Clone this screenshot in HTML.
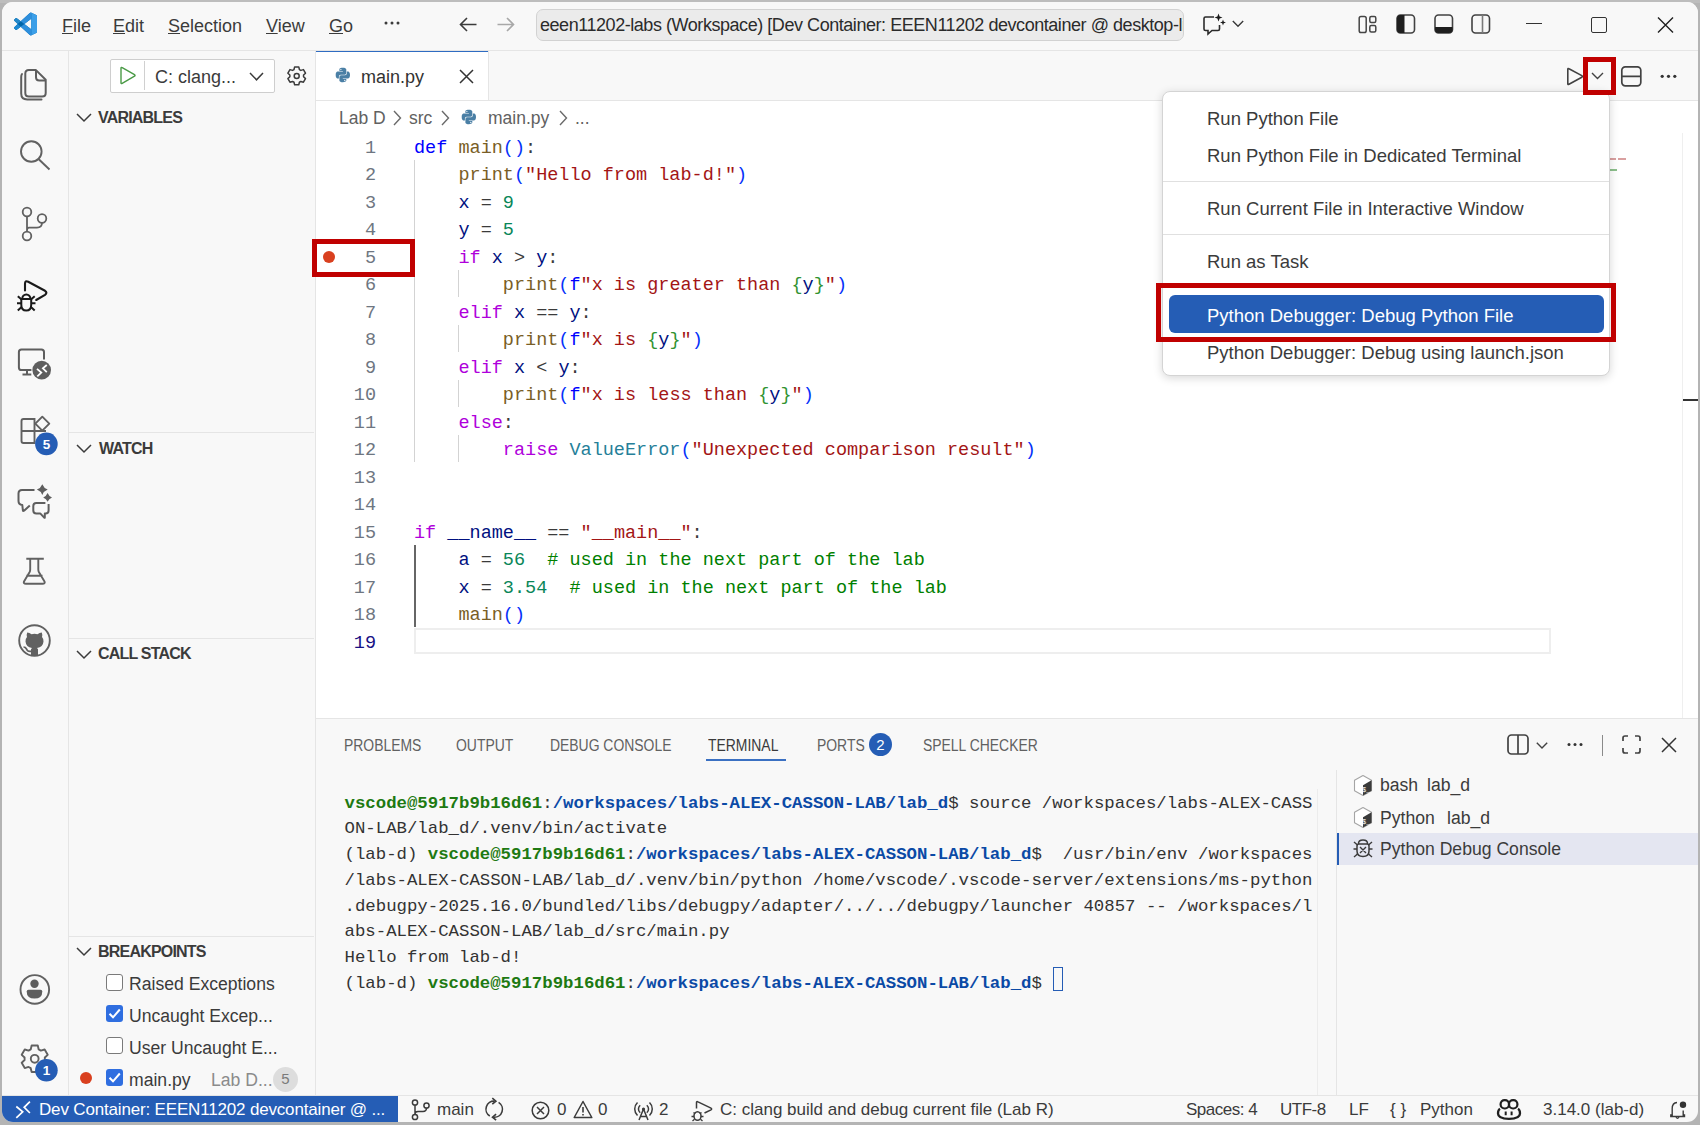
<!DOCTYPE html>
<html><head><meta charset="utf-8">
<style>
*{box-sizing:border-box;margin:0;padding:0}
html,body{width:1700px;height:1125px;overflow:hidden;background:#b4b4b4;font-family:"Liberation Sans",sans-serif;color:#3b3b3b}
.a{position:absolute}
#win{position:absolute;left:2px;top:2px;width:1696px;height:1120px;border-radius:11px;overflow:hidden;background:#f8f8f8}
#in{position:absolute;left:-2px;top:-2px;width:1700px;height:1125px}
.t{position:absolute;white-space:pre;line-height:1}
.ui{font-size:18px}
.mono{font-family:"Liberation Mono",monospace}
svg{position:absolute;overflow:visible}
.hl{position:absolute;background:#e5e5e5}
.vl{position:absolute;background:#e5e5e5}

#code{position:absolute;left:414px;top:135px;width:1200px;height:560px;font-family:"Liberation Mono",monospace;font-size:18.5px;color:#3b3b3b}
#nums{position:absolute;left:315px;top:135px;width:61px;height:560px;font-family:"Liberation Mono",monospace;font-size:18.5px;color:#6e7681;text-align:right}
.cl{position:absolute;left:0;height:27.49px;line-height:27.49px;white-space:pre}
.ln{position:absolute;left:0;width:61px;height:27.49px;line-height:27.49px}
.ln.act{color:#171184}
.kw{color:#0000ff}.fn{color:#795e26}.b1{color:#0431fa}.b2{color:#319331}.s{color:#a31515}.v{color:#001080}.n{color:#098658}.c{color:#af00db}.cl2{color:#267f99}.cm{color:#008000}
span.cl{position:static;color:#267f99}
.red{position:absolute;border:5px solid #c00000}

.hdr{position:absolute;white-space:pre;line-height:1;font-weight:bold;font-size:16px;color:#3b3b3b;letter-spacing:-0.8px}
.sb{position:absolute;white-space:pre;line-height:1;font-size:17px;color:#3b3b3b}
.bp{position:absolute;white-space:pre;line-height:1;font-size:17.6px;color:#3b3b3b}
.cb{position:absolute;width:17px;height:17px;border:1.6px solid #7a7a7a;border-radius:3px;background:#fff}
.cbc{position:absolute;width:17px;height:17px;border-radius:3px;background:#2f6ee0}

.mi{position:absolute;left:44px;white-space:pre;line-height:1;font-size:18.5px;color:#3b3b3b}

.ptab{position:absolute;white-space:pre;line-height:1;font-size:16px;transform:scaleX(0.87);transform-origin:0 0;color:#616161}
#term{position:absolute;left:344.5px;top:0;font-family:"Liberation Mono",monospace;font-size:17.35px;color:#333}
.tl{position:absolute;left:0;white-space:pre;line-height:1}
.g{color:#1e7a12;font-weight:bold}.bl{color:#0b4aa6;font-weight:bold}
.tabit{position:absolute;white-space:pre;line-height:1;font-size:17.6px;color:#3b3b3b}
</style></head><body>
<div class="a" style="left:0;top:0;width:1700px;height:3px;background:#bdbdbd"></div>
<div id="win"><div id="in">

<!-- TITLE BAR -->
<div class="a" style="left:0;top:0;width:1700px;height:50px;background:#f8f8f8"></div>
<div class="hl" style="left:0;top:50px;width:1700px;height:1px"></div>
<svg style="left:14px;top:12px" width="23" height="24" viewBox="0 0 100 100">
<path fill="#0065a9" d="M96.46 10.8L75.86.87a6.23 6.23 0 0 0-7.1 1.21L29.35 38.04 12.17 25.01a4.16 4.16 0 0 0-5.32.24L1.34 30.25a4.17 4.17 0 0 0 0 6.16L16.23 50 1.33 63.59a4.17 4.17 0 0 0 0 6.16l5.52 5.01a4.16 4.16 0 0 0 5.32.24l17.18-13.04 39.41 35.96a6.23 6.23 0 0 0 7.1 1.21l20.6-9.93A6.25 6.25 0 0 0 100 83.57V16.43a6.25 6.25 0 0 0-3.54-5.63zM75.01 72.7L45.11 50l29.9-22.7z"/>
<path fill="#2489ca" d="M1.34 30.25a4.17 4.17 0 0 0 0 6.16L16.23 50l13.12-11.96-17.18-13.03a4.16 4.16 0 0 0-5.32.24z"/>
<path fill="#1f8ad2" d="M12.17 74.99l17.18-13.04L16.23 50 1.33 63.59a4.17 4.17 0 0 0 0 6.16l5.52 5.01a4.16 4.16 0 0 0 5.32.24z"/>
<path fill="#3c9fe8" d="M75.86 99.13a6.23 6.23 0 0 1-7.1-1.21c2.3 2.3 6.24.67 6.24-2.59V4.67c0-3.26-3.94-4.89-6.24-2.59a6.23 6.23 0 0 1 7.1-1.21l20.6 9.93A6.25 6.25 0 0 1 100 16.43v67.14a6.25 6.25 0 0 1-3.54 5.63z"/>
<path fill="#2e8fdc" d="M68.76 2.08L29.35 38.04 45.11 50 75 27.3V4.67c0-3.26-3.94-4.89-6.24-2.59zM45.11 50L29.35 61.96l39.41 35.96c2.3 2.3 6.24.67 6.24-2.59V72.7z"/>
</svg>
<div class="t ui" style="left:62px;top:17px"><u>F</u>ile</div>
<div class="t ui" style="left:113px;top:17px"><u>E</u>dit</div>
<div class="t ui" style="left:168px;top:17px"><u>S</u>election</div>
<div class="t ui" style="left:266px;top:17px"><u>V</u>iew</div>
<div class="t ui" style="left:329px;top:17px"><u>G</u>o</div>
<svg style="left:384px;top:21px" width="16" height="4"><circle cx="2" cy="2" r="1.5" fill="#3b3b3b"/><circle cx="8" cy="2" r="1.5" fill="#3b3b3b"/><circle cx="14" cy="2" r="1.5" fill="#3b3b3b"/></svg>
<svg style="left:459px;top:17px" width="18" height="15" viewBox="0 0 18 15"><path d="M8 1L1.5 7.5L8 14M1.5 7.5H17.5" fill="none" stroke="#3b3b3b" stroke-width="1.6"/></svg>
<svg style="left:497px;top:17px" width="18" height="15" viewBox="0 0 18 15"><path d="M10 1L16.5 7.5L10 14M16.5 7.5H0.5" fill="none" stroke="#a8a8a8" stroke-width="1.6"/></svg>
<div class="a" style="left:536px;top:9px;width:648px;height:32px;background:#ebebeb;border:1px solid #d2d2d2;border-radius:7px;overflow:hidden"><div class="t ui" style="left:3px;top:6px;color:#2b2b2b;letter-spacing:-0.45px">eeen11202-labs (Workspace) [Dev Container: EEEN11202 devcontainer @ desktop-linux]</div></div>
<svg style="left:1203px;top:13px" width="24" height="22" viewBox="0 0 24 22"><path d="M11 4H2.5Q1 4 1 5.5V16Q1 17.5 2.5 17.5H5V21L9 17.5H15Q16.5 17.5 16.5 16V12" fill="none" stroke="#2b2b2b" stroke-width="1.6"/><path d="M15.5 0.5L16.6 3.4L19.5 4.5L16.6 5.6L15.5 8.5L14.4 5.6L11.5 4.5L14.4 3.4Z" fill="#1a1a1a"/><path d="M20 6.5L20.8 8.7L23 9.5L20.8 10.3L20 12.5L19.2 10.3L17 9.5L19.2 8.7Z" fill="#1a1a1a"/></svg>
<svg style="left:1232px;top:20px" width="12" height="8" viewBox="0 0 12 8"><path d="M0.8 1L6 6.3L11.2 1" fill="none" stroke="#3b3b3b" stroke-width="1.4"/></svg>
<svg style="left:1358px;top:15px" width="20" height="19" viewBox="0 0 20 19"><rect x="1.2" y="1.5" width="7" height="16" rx="1.8" fill="none" stroke="#454545" stroke-width="1.5"/><rect x="11.8" y="1.5" width="6" height="6" rx="1.5" fill="none" stroke="#454545" stroke-width="1.5"/><rect x="11.8" y="10.5" width="6" height="6.5" rx="1.5" fill="none" stroke="#454545" stroke-width="1.5"/></svg>
<svg style="left:1396px;top:14px" width="20" height="20" viewBox="0 0 20 20"><rect x="1" y="1" width="17.5" height="18" rx="3.5" fill="none" stroke="#424242" stroke-width="1.6"/><path d="M4.5 1H8.5V19H4.5Q1 19 1 15.5V4.5Q1 1 4.5 1Z" fill="#1f1f1f"/></svg>
<svg style="left:1434px;top:14px" width="20" height="20" viewBox="0 0 20 20"><rect x="1" y="1" width="17.5" height="18" rx="3.5" fill="none" stroke="#424242" stroke-width="1.6"/><path d="M1 13H18.5V15.5Q18.5 19 15 19H4.5Q1 19 1 15.5Z" fill="#1f1f1f"/></svg>
<svg style="left:1471px;top:14px" width="20" height="20" viewBox="0 0 20 20"><rect x="1" y="1" width="17.5" height="18" rx="3.5" fill="none" stroke="#424242" stroke-width="1.6"/><path d="M11.5 1V19" stroke="#7a7a7a" stroke-width="1.6"/></svg>
<div class="a" style="left:1526px;top:23px;width:16px;height:1.3px;background:#333"></div>
<div class="a" style="left:1591px;top:17px;width:15.5px;height:15.5px;border:1.3px solid #333;border-radius:2px"></div>
<svg style="left:1657px;top:17px" width="17" height="16" viewBox="0 0 17 16"><path d="M1 0.5L16 15.5M16 0.5L1 15.5" stroke="#1f1f1f" stroke-width="1.4"/></svg>

<!-- ACTIVITY BAR -->
<div class="vl" style="left:68px;top:51px;width:1px;height:1044px"></div>
<svg style="left:14px;top:62px" width="40" height="40"><path d="M22 8.1H14.8Q11.3 8.1 11.3 11.6V31Q11.3 34.5 14.8 34.5H28.2Q31.7 34.5 31.7 31V17.8L22 8.1Z" fill="none" stroke="#5e5e5e" stroke-width="2" stroke-linejoin="round"/><path d="M22 8.3V15.3Q22 18.5 25.2 18.5H31.5" fill="none" stroke="#5e5e5e" stroke-width="2"/><path d="M8 12Q7.2 13 7.2 15V31.5Q7.2 37.4 13.2 37.4H27.5" fill="none" stroke="#5e5e5e" stroke-width="2" stroke-linecap="round"/></svg>
<svg style="left:18px;top:138px" width="34" height="34" viewBox="0 0 34 34"><circle cx="13.3" cy="13.5" r="10.3" fill="none" stroke="#616161" stroke-width="1.9"/><path d="M20.5 21L31.5 31.5" stroke="#616161" stroke-width="1.9"/></svg>
<svg style="left:18px;top:203px" width="32" height="40" viewBox="0 0 32 40"><circle cx="9" cy="9" r="4.3" fill="none" stroke="#616161" stroke-width="1.8"/><circle cx="24" cy="15.5" r="4.3" fill="none" stroke="#616161" stroke-width="1.8"/><circle cx="9" cy="33" r="4.3" fill="none" stroke="#616161" stroke-width="1.8"/><path d="M9 13.3V28.7M24 19.8Q24 24.6 19 24.6H11Q9 24.6 9 27" fill="none" stroke="#616161" stroke-width="1.8"/></svg>
<svg style="left:12px;top:275px" width="40" height="40"><path d="M13 15.5V8.8Q13 5.2 16.2 6.8L33 15.8Q35.8 17.8 33 19.8L24.2 25" fill="none" stroke="#1a1a1a" stroke-width="2.1" stroke-linejoin="round" stroke-linecap="round"/><path d="M10.2 24A4.1 4.6 0 0 1 18.4 24" fill="none" stroke="#1a1a1a" stroke-width="2"/><path d="M9.3 24H19.2V29.8Q19.2 35.6 14.25 35.6Q9.3 35.6 9.3 29.8Z" fill="none" stroke="#1a1a1a" stroke-width="2" stroke-linejoin="round"/><path d="M5.8 21.2L9.6 24.5M22.7 21.2L18.9 24.5M5 28.3H9.3M19.2 28.3H23.5M5.8 35.5L9.6 32M22.7 35.5L18.9 32" fill="none" stroke="#1a1a1a" stroke-width="2"/></svg>
<svg style="left:17px;top:347px" width="38" height="34"><path d="M16.5 23H4.5Q1.9 23 1.9 20.4V5Q1.9 2.4 4.5 2.4H24.4Q27 2.4 27 5V12.5" fill="none" stroke="#5e5e5e" stroke-width="2"/><path d="M10 23.5V27.5M5.5 27.6H14.3" stroke="#5e5e5e" stroke-width="2"/><circle cx="24.7" cy="23.1" r="10.4" fill="#f8f8f8"/><circle cx="24.7" cy="23.1" r="9.3" fill="#5e5e5e"/><path d="M20 21.9L24.3 25.6L20.3 29.4M29.8 18L25.9 21.3L29.8 25.1" fill="none" stroke="#fff" stroke-width="1.8"/></svg>
<svg style="left:19px;top:413px" width="40" height="45" viewBox="0 0 40 45"><path d="M4.5 6H15.5V30H4.5Q2.5 30 2.5 28V8Q2.5 6 4.5 6ZM2.5 18H27M15.5 18V30" fill="none" stroke="#616161" stroke-width="1.9"/><path d="M23.3 3.7L30.3 10.7L23.3 17.7L16.3 10.7Z" fill="none" stroke="#616161" stroke-width="1.9" stroke-linejoin="round"/><circle cx="27.4" cy="30.9" r="11.3" fill="#255db5"/><text x="27.4" y="36" text-anchor="middle" font-family="Liberation Sans" font-weight="bold" font-size="13.5" fill="#fff">5</text></svg>
<svg style="left:16px;top:484px" width="40" height="40"><path d="M18.5 6H6Q2.5 6 2.5 9.5V17Q2.5 20.5 6.3 21L6.9 26.5Q7 27.5 8 26.8L13.8 21.6" fill="none" stroke="#5e5e5e" stroke-width="2" stroke-linejoin="round"/><path d="M29.4 19H20.3Q17.3 19 17.3 22V26.4Q17.3 29.4 20.3 29.4H24.2L28.2 33.6Q28.8 34.2 28.8 33.2V29.4H29.6Q32.6 29.4 32.6 26.4V20" fill="none" stroke="#5e5e5e" stroke-width="2" stroke-linejoin="round"/><path d="M26.30 0.20Q27.81 4.09 31.70 5.60Q27.81 7.11 26.30 11.00Q24.79 7.11 20.90 5.60Q24.79 4.09 26.30 0.20Z" fill="#5e5e5e"/><path d="M31.60 9.00Q32.83 12.17 36.00 13.40Q32.83 14.63 31.60 17.80Q30.37 14.63 27.20 13.40Q30.37 12.17 31.60 9.00Z" fill="#5e5e5e"/></svg>
<svg style="left:20px;top:553px" width="30" height="34" viewBox="0 0 30 34"><path d="M6.3 5.7H23.8M10.2 5.7V16.5Q10.2 18 9.5 19.3L4 28.5Q3 30.8 6 30.8H22.5Q25.5 30.8 24.5 28.5L19 19.3Q18.3 18 18.3 16.5V5.7M6.3 22.8H22.5" fill="none" stroke="#616161" stroke-width="1.9" stroke-linejoin="round"/></svg>
<svg style="left:17px;top:623px" width="36" height="36" viewBox="0 0 36 36"><circle cx="17.5" cy="17.5" r="15.3" fill="none" stroke="#616161" stroke-width="1.9"/><path d="M14 32.5V27.5Q13.5 26 15 25Q9 24.3 8.5 18.5Q8.3 15.8 10 14Q9.3 12 10.2 9.5Q12.5 9.5 14.5 11.2Q17.5 10.4 20.5 11.2Q22.5 9.5 24.8 9.5Q25.7 12 25 14Q26.7 15.8 26.5 18.5Q26 24.3 20 25Q21.5 26 21 28V32.5Z" fill="#616161"/><path d="M14.2 28.3Q10.5 29 9.5 26Q8.5 24 6.5 24" fill="none" stroke="#616161" stroke-width="1.7"/></svg>
<svg style="left:19px;top:974px" width="32" height="32" viewBox="0 0 32 32"><circle cx="15.8" cy="15.4" r="14.3" fill="none" stroke="#616161" stroke-width="1.9"/><circle cx="15.5" cy="9.8" r="4.2" fill="#5e5e5e"/><path d="M9.5 15.7H21.5Q23.3 15.7 23.3 17.5Q23.3 24.6 15.5 24.6Q7.7 24.6 7.7 17.5Q7.7 15.7 9.5 15.7Z" fill="#5e5e5e"/></svg>
<svg style="left:19px;top:1043px" width="42" height="42"><path d="M11.71 6.41L12.64 2.55L18.76 2.55L19.69 6.41L21.84 7.65L25.65 6.52L28.71 11.82L25.82 14.56L25.82 17.04L28.71 19.78L25.65 25.08L21.84 23.95L19.69 25.19L18.76 29.05L12.64 29.05L11.71 25.19L9.56 23.95L5.75 25.08L2.69 19.78L5.58 17.04L5.58 14.56L2.69 11.82L5.75 6.52L9.56 7.65Z" fill="none" stroke="#616161" stroke-width="1.9" stroke-linejoin="round"/><circle cx="15.7" cy="15.8" r="3.9" fill="none" stroke="#616161" stroke-width="1.9"/><circle cx="27.4" cy="27.3" r="11.3" fill="#255db5"/><text x="27.4" y="32.3" text-anchor="middle" font-family="Liberation Sans" font-weight="bold" font-size="13.5" fill="#fff">1</text></svg>

<!-- SIDEBAR -->
<div class="vl" style="left:315px;top:51px;width:1px;height:1044px"></div>
<div class="a" style="left:110px;top:59px;width:165px;height:34px;background:#fff;border:1px solid #cecece;border-radius:2px"></div>
<svg style="left:119px;top:66px" width="18" height="19" viewBox="0 0 18 19"><path d="M2 2.2Q2 1 3.2 1.7L15.5 8.6Q16.6 9.4 15.5 10.2L3.2 17.3Q2 18 2 16.8Z" fill="none" stroke="#4a9a46" stroke-width="1.4" stroke-linejoin="round"/></svg>
<div class="a" style="left:144px;top:61px;width:1px;height:29px;background:#d0d0d0"></div>
<div class="t" style="left:155px;top:68px;font-size:18px;color:#3b3b3b">C: clang...</div>
<svg style="left:249px;top:72px" width="15" height="9" viewBox="0 0 15 9"><path d="M1 1L7.5 7.8L14 1" fill="none" stroke="#3b3b3b" stroke-width="1.5"/></svg>
<svg style="left:286px;top:65px" width="22" height="22"><path d="M8.00 4.55L8.63 1.94L12.77 1.94L13.40 4.55L14.85 5.39L17.43 4.63L19.50 8.21L17.55 10.06L17.55 11.74L19.50 13.59L17.43 17.17L14.85 16.41L13.40 17.25L12.77 19.86L8.63 19.86L8.00 17.25L6.55 16.41L3.97 17.17L1.90 13.59L3.85 11.74L3.85 10.06L1.90 8.21L3.97 4.63L6.55 5.39Z" fill="none" stroke="#3b3b3b" stroke-width="1.5" stroke-linejoin="round"/><circle cx="10.7" cy="10.9" r="2.5" fill="none" stroke="#3b3b3b" stroke-width="1.5"/></svg>
<svg style="left:76px;top:113px" width="16" height="9" viewBox="0 0 16 9"><path d="M1 1L8 8L15 1" fill="none" stroke="#3b3b3b" stroke-width="1.5"/></svg>
<div class="hdr" style="left:98px;top:109.8px">VARIABLES</div>
<div class="hl" style="left:69px;top:432px;width:245px;height:1px"></div>
<svg style="left:76px;top:444px" width="16" height="9" viewBox="0 0 16 9"><path d="M1 1L8 8L15 1" fill="none" stroke="#3b3b3b" stroke-width="1.5"/></svg>
<div class="hdr" style="left:99px;top:441px">WATCH</div>
<div class="hl" style="left:69px;top:638px;width:245px;height:1px"></div>
<svg style="left:76px;top:650px" width="16" height="9" viewBox="0 0 16 9"><path d="M1 1L8 8L15 1" fill="none" stroke="#3b3b3b" stroke-width="1.5"/></svg>
<div class="hdr" style="left:98px;top:646px">CALL STACK</div>
<div class="hl" style="left:69px;top:936px;width:245px;height:1px"></div>
<svg style="left:76px;top:947px" width="16" height="9" viewBox="0 0 16 9"><path d="M1 1L8 8L15 1" fill="none" stroke="#3b3b3b" stroke-width="1.5"/></svg>
<div class="hdr" style="left:98px;top:943.8px">BREAKPOINTS</div>
<div class="cb" style="left:106px;top:974px"></div>
<div class="bp" style="left:129px;top:976px">Raised Exceptions</div>
<div class="cbc" style="left:106px;top:1005px"></div><svg style="left:106px;top:1005px" width="17" height="17" viewBox="0 0 17 17"><path d="M3.5 8.8L7 12.3L13.8 4.5" fill="none" stroke="#fff" stroke-width="2"/></svg>
<div class="bp" style="left:129px;top:1008px">Uncaught Excep...</div>
<div class="cb" style="left:106px;top:1037px"></div>
<div class="bp" style="left:129px;top:1040px">User Uncaught E...</div>
<div class="a" style="left:80px;top:1072px;width:12px;height:12px;border-radius:50%;background:#d9401f"></div>
<div class="cbc" style="left:106px;top:1069px"></div><svg style="left:106px;top:1069px" width="17" height="17" viewBox="0 0 17 17"><path d="M3.5 8.8L7 12.3L13.8 4.5" fill="none" stroke="#fff" stroke-width="2"/></svg>
<div class="bp" style="left:129px;top:1072px">main.py</div>
<div class="bp" style="left:211px;top:1072px;color:#8b8b8b">Lab D...</div>
<div class="a" style="left:273px;top:1067px;width:25px;height:25px;border-radius:50%;background:#dddddd"></div>
<div class="t" style="left:273px;top:1071px;width:25px;text-align:center;font-size:15px;color:#7a7a7a">5</div>

<!-- EDITOR -->
<div class="a" style="left:316px;top:51px;width:1384px;height:667px;background:#fff"></div>
<div class="a" style="left:488px;top:51px;width:1212px;height:49px;background:#f8f8f8"></div>
<div class="hl" style="left:315px;top:100px;width:1385px;height:1px"></div>
<div class="a" style="left:316px;top:50.5px;width:172px;height:1.8px;background:#2f6cc2"></div>
<div class="vl" style="left:488px;top:51px;width:1px;height:49px"></div>

<!-- TABS -->
<svg style="left:335px;top:67px" width="16" height="16" viewBox="0 0 16 16"><path d="M7.8 0.8C4.2 0.8 4.4 2.4 4.4 2.4V4.1H7.9V4.6H3C3 4.6 0.7 4.3 0.7 8C0.7 11.6 2.7 11.5 2.7 11.5H3.9V9.8C3.9 9.8 3.8 7.8 5.9 7.8H9.4C9.4 7.8 11.3 7.8 11.3 6V2.8C11.3 2.8 11.6 0.8 7.8 0.8ZM5.9 1.9A0.65 0.65 0 1 1 5.9 3.2A0.65 0.65 0 1 1 5.9 1.9Z" fill="#4a7fa5"/><path d="M7.9 15.2C11.5 15.2 11.3 13.6 11.3 13.6V11.9H7.8V11.4H12.7C12.7 11.4 15 11.7 15 8C15 4.4 13 4.5 13 4.5H11.8V6.2C11.8 6.2 11.9 8.2 9.8 8.2H6.3C6.3 8.2 4.4 8.2 4.4 10V13.2C4.4 13.2 4.1 15.2 7.9 15.2ZM9.8 14.1A0.65 0.65 0 1 1 9.8 12.8A0.65 0.65 0 1 1 9.8 14.1Z" fill="#4a7fa5"/></svg>
<div class="t ui" style="left:361px;top:68px;color:#333">main.py</div>
<svg style="left:459px;top:69px" width="15" height="15" viewBox="0 0 15 15"><path d="M1 1L14 14M14 1L1 14" stroke="#333" stroke-width="1.5"/></svg>
<div class="t" style="left:339px;top:110px;font-size:17.5px;color:#616161">Lab D</div><svg style="left:393px;top:110px" width="9" height="16" viewBox="0 0 9 16"><path d="M1 1L7.5 8L1 15" fill="none" stroke="#6a6a6a" stroke-width="1.4"/></svg>
<div class="t" style="left:409px;top:110px;font-size:17.5px;color:#616161">src</div><svg style="left:441px;top:110px" width="9" height="16" viewBox="0 0 9 16"><path d="M1 1L7.5 8L1 15" fill="none" stroke="#6a6a6a" stroke-width="1.4"/></svg><svg style="left:461px;top:109px" width="16" height="16" viewBox="0 0 16 16"><path d="M7.8 0.8C4.2 0.8 4.4 2.4 4.4 2.4V4.1H7.9V4.6H3C3 4.6 0.7 4.3 0.7 8C0.7 11.6 2.7 11.5 2.7 11.5H3.9V9.8C3.9 9.8 3.8 7.8 5.9 7.8H9.4C9.4 7.8 11.3 7.8 11.3 6V2.8C11.3 2.8 11.6 0.8 7.8 0.8ZM5.9 1.9A0.65 0.65 0 1 1 5.9 3.2A0.65 0.65 0 1 1 5.9 1.9Z" fill="#4a7fa5"/><path d="M7.9 15.2C11.5 15.2 11.3 13.6 11.3 13.6V11.9H7.8V11.4H12.7C12.7 11.4 15 11.7 15 8C15 4.4 13 4.5 13 4.5H11.8V6.2C11.8 6.2 11.9 8.2 9.8 8.2H6.3C6.3 8.2 4.4 8.2 4.4 10V13.2C4.4 13.2 4.1 15.2 7.9 15.2ZM9.8 14.1A0.65 0.65 0 1 1 9.8 12.8A0.65 0.65 0 1 1 9.8 14.1Z" fill="#4a7fa5"/></svg>
<div class="t" style="left:488px;top:110px;font-size:17.5px;color:#616161">main.py</div><svg style="left:559px;top:110px" width="9" height="16" viewBox="0 0 9 16"><path d="M1 1L7.5 8L1 15" fill="none" stroke="#6a6a6a" stroke-width="1.4"/></svg>
<div class="t" style="left:575px;top:110px;font-size:17.5px;color:#616161">...</div>
<svg style="left:1566px;top:67px" width="18" height="19" viewBox="0 0 18 19"><path d="M1.8 2.2Q1.8 1 3 1.7L15.8 8.6Q17 9.4 15.8 10.2L3 17.3Q1.8 18 1.8 16.8Z" fill="none" stroke="#424242" stroke-width="1.6" stroke-linejoin="round"/></svg>
<svg style="left:1591px;top:72px" width="13" height="8" viewBox="0 0 13 8"><path d="M1 1L6.5 6.5L12 1" fill="none" stroke="#424242" stroke-width="1.4"/></svg>
<svg style="left:1620px;top:65px" width="23" height="23" viewBox="0 0 23 23"><rect x="1.8" y="1.8" width="19" height="19" rx="3.5" fill="none" stroke="#424242" stroke-width="1.7"/><path d="M1.8 11.3H20.8" stroke="#424242" stroke-width="1.7"/></svg>
<svg style="left:1660px;top:74px" width="17" height="5"><circle cx="2.2" cy="2.3" r="1.6" fill="#333"/><circle cx="8.5" cy="2.3" r="1.6" fill="#333"/><circle cx="14.8" cy="2.3" r="1.6" fill="#333"/></svg>
<div class="a" style="left:1682px;top:133px;width:1px;height:585px;background:#efefef"></div>
<div class="a" style="left:1683px;top:399px;width:15px;height:2px;background:#333"></div>
<div class="a" style="left:1610px;top:158px;width:6px;height:1.5px;background:#d9a0a0"></div>
<div class="a" style="left:1618px;top:158px;width:8px;height:1.5px;background:#d9a0a0"></div>
<div class="a" style="left:1610px;top:169px;width:7px;height:2px;background:#8cc08c"></div>
<!-- CODE -->
<div id="nums"><div class="ln" style="top:0.00px">1</div>
<div class="ln" style="top:27.49px">2</div>
<div class="ln" style="top:54.98px">3</div>
<div class="ln" style="top:82.47px">4</div>
<div class="ln" style="top:109.96px">5</div>
<div class="ln" style="top:137.45px">6</div>
<div class="ln" style="top:164.94px">7</div>
<div class="ln" style="top:192.43px">8</div>
<div class="ln" style="top:219.92px">9</div>
<div class="ln" style="top:247.41px">10</div>
<div class="ln" style="top:274.90px">11</div>
<div class="ln" style="top:302.39px">12</div>
<div class="ln" style="top:329.88px">13</div>
<div class="ln" style="top:357.37px">14</div>
<div class="ln" style="top:384.86px">15</div>
<div class="ln" style="top:412.35px">16</div>
<div class="ln" style="top:439.84px">17</div>
<div class="ln" style="top:467.33px">18</div>
<div class="ln act" style="top:494.82px">19</div></div>
<div class="a" style="left:414px;top:160px;width:1px;height:302px;background:#d3d3d3"></div>
<div class="a" style="left:458px;top:270px;width:1px;height:27px;background:#d3d3d3"></div>
<div class="a" style="left:458px;top:325px;width:1px;height:27px;background:#d3d3d3"></div>
<div class="a" style="left:458px;top:380px;width:1px;height:27px;background:#d3d3d3"></div>
<div class="a" style="left:458px;top:435px;width:1px;height:27px;background:#d3d3d3"></div>
<div class="a" style="left:414px;top:545px;width:1.6px;height:82px;background:#666"></div>
<div class="a" style="left:414px;top:628px;width:1137px;height:26px;border:2px solid #eeeeee"></div>
<div id="code">
<div class="cl" style="top:0.00px"><span class="kw">def</span> <span class="fn">main</span><span class="b1">()</span>:</div>
<div class="cl" style="top:27.49px">    <span class="fn">print</span><span class="b1">(</span><span class="s">&quot;Hello from lab-d!&quot;</span><span class="b1">)</span></div>
<div class="cl" style="top:54.98px">    <span class="v">x</span> = <span class="n">9</span></div>
<div class="cl" style="top:82.47px">    <span class="v">y</span> = <span class="n">5</span></div>
<div class="cl" style="top:109.96px">    <span class="c">if</span> <span class="v">x</span> &gt; <span class="v">y</span>:</div>
<div class="cl" style="top:137.45px">        <span class="fn">print</span><span class="b1">(</span><span class="kw">f</span><span class="s">&quot;x is greater than </span><span class="b2">{</span><span class="v">y</span><span class="b2">}</span><span class="s">&quot;</span><span class="b1">)</span></div>
<div class="cl" style="top:164.94px">    <span class="c">elif</span> <span class="v">x</span> == <span class="v">y</span>:</div>
<div class="cl" style="top:192.43px">        <span class="fn">print</span><span class="b1">(</span><span class="kw">f</span><span class="s">&quot;x is </span><span class="b2">{</span><span class="v">y</span><span class="b2">}</span><span class="s">&quot;</span><span class="b1">)</span></div>
<div class="cl" style="top:219.92px">    <span class="c">elif</span> <span class="v">x</span> &lt; <span class="v">y</span>:</div>
<div class="cl" style="top:247.41px">        <span class="fn">print</span><span class="b1">(</span><span class="kw">f</span><span class="s">&quot;x is less than </span><span class="b2">{</span><span class="v">y</span><span class="b2">}</span><span class="s">&quot;</span><span class="b1">)</span></div>
<div class="cl" style="top:274.90px">    <span class="c">else</span>:</div>
<div class="cl" style="top:302.39px">        <span class="c">raise</span> <span class="cl">ValueError</span><span class="b1">(</span><span class="s">&quot;Unexpected comparison result&quot;</span><span class="b1">)</span></div>
<div class="cl" style="top:329.88px"></div>
<div class="cl" style="top:357.37px"></div>
<div class="cl" style="top:384.86px"><span class="c">if</span> <span class="v">__name__</span> == <span class="s">&quot;__main__&quot;</span>:</div>
<div class="cl" style="top:412.35px">    <span class="v">a</span> = <span class="n">56</span>  <span class="cm"># used in the next part of the lab</span></div>
<div class="cl" style="top:439.84px">    <span class="v">x</span> = <span class="n">3.54</span>  <span class="cm"># used in the next part of the lab</span></div>
<div class="cl" style="top:467.33px">    <span class="fn">main</span><span class="b1">()</span></div>
<div class="cl" style="top:494.82px"></div></div>
<div class="a" style="left:323px;top:251px;width:12px;height:12px;border-radius:50%;background:#d9401f"></div>
<div class="red" style="left:312px;top:239px;width:103px;height:38px"></div>

<!-- PANEL -->
<div class="a" style="left:316px;top:718px;width:1384px;height:377px;background:#f8f8f8"></div>
<div class="hl" style="left:315px;top:718px;width:1385px;height:1px"></div>
<div class="ptab" style="left:344px;top:738px">PROBLEMS</div>
<div class="ptab" style="left:456px;top:738px">OUTPUT</div>
<div class="ptab" style="left:550px;top:738px">DEBUG CONSOLE</div>
<div class="ptab" style="left:708px;top:738px;color:#3b3b3b">TERMINAL</div>
<div class="a" style="left:706px;top:759px;width:80px;height:1.6px;background:#3a70c2"></div>
<div class="ptab" style="left:817px;top:738px">PORTS</div>
<div class="a" style="left:869px;top:733px;width:23px;height:23px;border-radius:50%;background:#255db5"></div>
<div class="t" style="left:869px;top:737px;width:23px;text-align:center;font-size:15px;color:#fff">2</div>
<div class="ptab" style="left:923px;top:738px">SPELL CHECKER</div>
<svg style="left:1507px;top:734px" width="22" height="21" viewBox="0 0 22 21"><rect x="1" y="1" width="20" height="19" rx="3.5" fill="none" stroke="#424242" stroke-width="1.7"/><path d="M11 1V20" stroke="#424242" stroke-width="1.7"/></svg>
<svg style="left:1536px;top:742px" width="12" height="7" viewBox="0 0 12 7"><path d="M0.8 0.8L6 6L11.2 0.8" fill="none" stroke="#424242" stroke-width="1.4"/></svg>
<svg style="left:1567px;top:742px" width="16" height="5"><circle cx="2" cy="2.5" r="1.5" fill="#333"/><circle cx="8" cy="2.5" r="1.5" fill="#333"/><circle cx="14" cy="2.5" r="1.5" fill="#333"/></svg>
<div class="a" style="left:1602px;top:735px;width:1.3px;height:21px;background:#8a8a8a"></div>
<svg style="left:1622px;top:735px" width="19" height="19" viewBox="0 0 19 19"><path d="M1 6V3Q1 1 3 1H6M13 1H16Q18 1 18 3V6M18 13V16Q18 18 16 18H13M6 18H3Q1 18 1 16V13" fill="none" stroke="#424242" stroke-width="1.7"/></svg>
<svg style="left:1661px;top:737px" width="16" height="16" viewBox="0 0 16 16"><path d="M1 1L15 15M15 1L1 15" stroke="#333" stroke-width="1.5"/></svg>
<div id="term">
<div class="tl" style="top:794.70px"><span class="g">vscode@5917b9b16d61</span>:<span class="bl">/workspaces/labs-ALEX-CASSON-LAB/lab_d</span>$ source /workspaces/labs-ALEX-CASS</div>
<div class="tl" style="top:820.40px">ON-LAB/lab_d/.venv/bin/activate</div>
<div class="tl" style="top:846.10px">(lab-d) <span class="g">vscode@5917b9b16d61</span>:<span class="bl">/workspaces/labs-ALEX-CASSON-LAB/lab_d</span>$  /usr/bin/env /workspaces</div>
<div class="tl" style="top:871.80px">/labs-ALEX-CASSON-LAB/lab_d/.venv/bin/python /home/vscode/.vscode-server/extensions/ms-python</div>
<div class="tl" style="top:897.50px">.debugpy-2025.16.0/bundled/libs/debugpy/adapter/../../debugpy/launcher 40857 -- /workspaces/l</div>
<div class="tl" style="top:923.20px">abs-ALEX-CASSON-LAB/lab_d/src/main.py</div>
<div class="tl" style="top:948.90px">Hello from lab-d!</div>
<div class="tl" style="top:974.60px">(lab-d) <span class="g">vscode@5917b9b16d61</span>:<span class="bl">/workspaces/labs-ALEX-CASSON-LAB/lab_d</span>$ </div>
</div>
<div class="a" style="left:1053px;top:967px;width:10px;height:24px;border:1.5px solid #255db5"></div>
<div class="a" style="left:1317px;top:789px;width:1px;height:306px;background:#ececec"></div>
<div class="a" style="left:1336px;top:770px;width:1px;height:325px;background:#e5e5e5"></div>
<svg style="left:1353px;top:774px" width="20" height="23" viewBox="0 0 20 23"><path d="M10 1.5L18.5 6.3V16.7L10 21.5L1.5 16.7V6.3Z" fill="#fff" stroke="#a5a5a5" stroke-width="1.1" stroke-linejoin="round"/><path d="M10 11.2L18.5 6.3V16.7L10 21.5Z" fill="#3b3b3b"/><text x="13.3" y="17.5" font-family="Liberation Mono" font-size="7" fill="#fff" text-anchor="middle">$_</text></svg><div class="tabit" style="left:1380px;top:777.10px">bash</div><div class="tabit" style="left:1427px;top:777.10px">lab_d</div>
<svg style="left:1353px;top:806px" width="20" height="23" viewBox="0 0 20 23"><path d="M10 1.5L18.5 6.3V16.7L10 21.5L1.5 16.7V6.3Z" fill="#fff" stroke="#a5a5a5" stroke-width="1.1" stroke-linejoin="round"/><path d="M10 11.2L18.5 6.3V16.7L10 21.5Z" fill="#3b3b3b"/><text x="13.3" y="17.5" font-family="Liberation Mono" font-size="7" fill="#fff" text-anchor="middle">$_</text></svg><div class="tabit" style="left:1380px;top:809.50px">Python</div><div class="tabit" style="left:1447px;top:809.50px">lab_d</div>
<div class="a" style="left:1337px;top:833px;width:363px;height:32px;background:#e4e6f1"></div>
<div class="a" style="left:1337px;top:833px;width:2px;height:32px;background:#255db5"></div>
<svg style="left:1352px;top:837px" width="22" height="23" viewBox="0 0 22 23"><path d="M6.5 6.5Q6.5 3 11 3Q15.5 3 15.5 6.5M5 9Q5 7 7 7H15Q17 7 17 9V14Q17 19.5 11 19.5Q5 19.5 5 14Z" fill="none" stroke="#3b3b3b" stroke-width="1.5"/><path d="M8 10L14 16M14 10L8 16M1.5 12H5M17 12H20.5M2 5L5.5 8M20 5L16.5 8M2 20L5.5 17M20 20L16.5 17" fill="none" stroke="#3b3b3b" stroke-width="1.4"/></svg>
<div class="tabit" style="left:1380px;top:840.60px">Python Debug Console</div>

<!-- STATUS BAR -->
<div class="hl" style="left:0;top:1095px;width:1700px;height:1px"></div>
<div class="a" style="left:0;top:1096px;width:398px;height:30px;background:#255db5"></div>
<svg style="left:10px;top:1095px" width="26" height="28"><path d="M6.3 11.5L12.7 16.8L6.3 22.9M19.9 6.6L14.2 12.3L19.9 18" fill="none" stroke="#fff" stroke-width="1.7"/></svg>
<div class="sb" style="left:39px;top:1101px;color:#fff;letter-spacing:-0.17px">Dev Container: EEEN11202 devcontainer @ ...</div>
<svg style="left:411px;top:1099px" width="20" height="22" viewBox="0 0 20 22"><circle cx="4" cy="3.5" r="2.6" fill="none" stroke="#3b3b3b" stroke-width="1.5"/><circle cx="15.5" cy="6.5" r="2.6" fill="none" stroke="#3b3b3b" stroke-width="1.5"/><circle cx="4" cy="18" r="2.6" fill="none" stroke="#3b3b3b" stroke-width="1.5"/><path d="M4 6.1V15.4M15.5 9.1Q15.5 12.5 12 12.5H7Q4 12.5 4 15" fill="none" stroke="#3b3b3b" stroke-width="1.5"/></svg>
<div class="sb" style="left:437px;top:1101px">main</div>
<svg style="left:480px;top:1097px" width="30" height="26"><path d="M9.8 19A8 8 0 0 1 14.6 4.2M18.6 5.4A8 8 0 0 1 13.8 20.2" fill="none" stroke="#3b3b3b" stroke-width="1.6"/><path d="M12.3 1.2L15.9 4.2L12.3 7.2M16.1 17.2L12.5 20.2L16.1 23.2" fill="none" stroke="#3b3b3b" stroke-width="1.6"/></svg>
<svg style="left:531px;top:1101px" width="19" height="19" viewBox="0 0 19 19"><circle cx="9.5" cy="9.5" r="8.3" fill="none" stroke="#3b3b3b" stroke-width="1.5"/><path d="M6 6L13 13M13 6L6 13" stroke="#3b3b3b" stroke-width="1.5"/></svg>
<div class="sb" style="left:557px;top:1101px">0</div>
<svg style="left:573px;top:1100px" width="20" height="19" viewBox="0 0 20 19"><path d="M10 1.5L18.8 17.5H1.2Z" fill="none" stroke="#3b3b3b" stroke-width="1.5" stroke-linejoin="round"/><path d="M10 7V12.5M10 14V15.5" stroke="#3b3b3b" stroke-width="1.6"/></svg>
<div class="sb" style="left:598px;top:1101px">0</div>
<svg style="left:633px;top:1100px" width="21" height="21" viewBox="0 0 21 21"><path d="M4.5 2.5A9 9 0 0 0 4.5 15.5M16.5 2.5A9 9 0 0 1 16.5 15.5M7.2 5.2A5 5 0 0 0 7.2 12.8M13.8 5.2A5 5 0 0 1 13.8 12.8M10.5 9L6 20M10.5 9L15 20M7.5 16.5H13.5" fill="none" stroke="#3b3b3b" stroke-width="1.5"/><circle cx="10.5" cy="9" r="1.6" fill="#3b3b3b"/></svg>
<div class="sb" style="left:659px;top:1101px">2</div>
<svg style="left:690px;top:1100px" width="24" height="23" viewBox="0 0 24 23"><path d="M6.5 8.5V2.5Q6.5 1 8 1.8L21 8.2Q22.3 9 21 9.8L14.5 13" fill="none" stroke="#3b3b3b" stroke-width="1.5" stroke-linejoin="round"/><ellipse cx="7.5" cy="16" rx="3.5" ry="4.3" fill="none" stroke="#3b3b3b" stroke-width="1.5"/><path d="M3.5 12.5L5.2 13.8M11.5 12.5L9.8 13.8M1.5 16.5H4M11 16.5H13.5M2.5 21L4.5 19.3M12.5 21L10.5 19.3" fill="none" stroke="#3b3b3b" stroke-width="1.4"/></svg>
<div class="sb" style="left:720px;top:1101px">C: clang build and debug current file (Lab R)</div>
<div class="sb" style="left:1186px;top:1101px;letter-spacing:-0.5px">Spaces: 4</div>
<div class="sb" style="left:1280px;top:1101px;letter-spacing:-0.5px">UTF-8</div>
<div class="sb" style="left:1349px;top:1101px">LF</div>
<div class="sb" style="left:1390px;top:1101px">{ }</div>
<div class="sb" style="left:1420px;top:1101px">Python</div>
<svg style="left:1490px;top:1095px" width="40" height="30"><rect x="10.6" y="5.1" width="8.4" height="8.4" rx="4" fill="none" stroke="#1f1f1f" stroke-width="2.2"/><rect x="19" y="5.1" width="8.4" height="8.4" rx="4" fill="none" stroke="#1f1f1f" stroke-width="2.2"/><path d="M10 13.8Q8 15 8 18.5Q8 23.8 19 23.8Q30 23.8 30 18.5Q30 15 28 13.8" fill="none" stroke="#1f1f1f" stroke-width="2.3"/><path d="M15.7 16.5V20.3M21.6 16.5V20.3" stroke="#1f1f1f" stroke-width="2"/></svg>
<div class="sb" style="left:1543px;top:1101px">3.14.0 (lab-d)</div>
<svg style="left:1669px;top:1100px" width="20" height="20" viewBox="0 0 20 20"><path d="M8 2.5Q3.3 2.8 3.2 8.5V15H1.8V16.5H15.5V15H14.2V10.5" fill="none" stroke="#3b3b3b" stroke-width="1.4"/><path d="M7 17Q8.5 19.5 10 17" fill="none" stroke="#3b3b3b" stroke-width="1.3"/><circle cx="14" cy="4.8" r="3.2" fill="#333"/></svg>

<!-- MENU -->
<div class="a" style="left:1162px;top:91px;width:448px;height:285px;background:#fff;border:1px solid #d4d4d4;border-radius:8px;box-shadow:0 2px 10px rgba(0,0,0,0.16)">
<div class="mi" style="top:18.2px">Run Python File</div>
<div class="mi" style="top:55.1px">Run Python File in Dedicated Terminal</div>
<div class="a" style="left:0;top:89px;width:446px;height:1px;background:#e0e0e0"></div>
<div class="mi" style="top:108.1px">Run Current File in Interactive Window</div>
<div class="a" style="left:0;top:142px;width:446px;height:1px;background:#e0e0e0"></div>
<div class="mi" style="top:160.9px">Run as Task</div>
<div class="a" style="left:6px;top:203px;width:435px;height:38px;background:#255db5;border-radius:6px"></div>
<div class="mi" style="top:215.0px;color:#fff">Python Debugger: Debug Python File</div>
<div class="mi" style="top:252.3px">Python Debugger: Debug using launch.json</div>
</div>
<div class="red" style="left:1156px;top:283px;width:460px;height:59px"></div>
<div class="red" style="left:1583px;top:57px;width:33px;height:38px"></div>
</div></div>
</body></html>
